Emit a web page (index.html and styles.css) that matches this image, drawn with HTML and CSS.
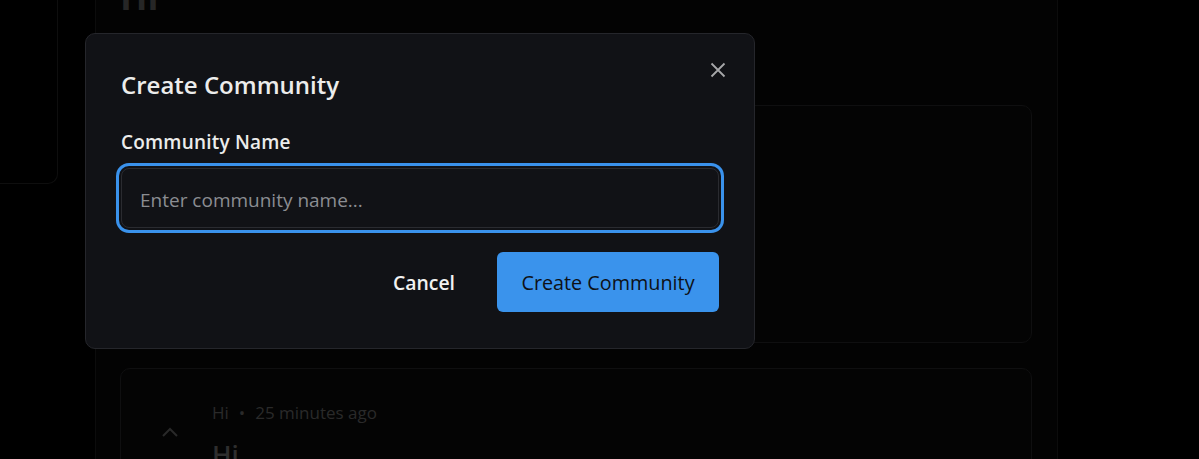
FILE: index.html
```html
<!DOCTYPE html>
<html lang="en">
<head>
<meta charset="utf-8">
<title>Create Community</title>
<link rel="stylesheet" href="styles.css">
</head>
<body>
<div class="page">
  <aside class="sidebar"><div class="side-box"></div></aside>
  <main class="feed">
    <h1 class="feed-title">Hi</h1>
    <article class="card card-tall"></article>
    <article class="card post">
      <div class="vote">
        <svg width="18" height="12" viewBox="0 0 18 12"><path d="M2 10 L9 3 L16 10" fill="none" stroke="currentColor" stroke-width="2"/></svg>
      </div>
      <div class="post-body">
        <div class="post-meta"><span>Hi</span><span class="dot">•</span><span>25 minutes ago</span></div>
        <h2 class="post-title">Hi</h2>
      </div>
    </article>
  </main>
</div>

<div class="overlay"></div>
<div class="modal" role="dialog">
  <button class="close" aria-label="Close">
    <svg width="16" height="16" viewBox="0 0 16 16"><path d="M1.5 1.5 L14.5 14.5 M14.5 1.5 L1.5 14.5" stroke="currentColor" stroke-width="1.8" fill="none"/></svg>
  </button>
  <h2 class="modal-title">Create Community</h2>
  <label class="field-label" for="cname">Community Name</label>
  <input id="cname" class="field-input" type="text" placeholder="Enter community name...">
  <div class="actions">
    <button class="btn-cancel">Cancel</button>
    <button class="btn-primary">Create Community</button>
  </div>
</div>
</body>
</html>
```

FILE: styles.css
```css
* { box-sizing: border-box; }
html, body { margin: 0; padding: 0; }
body {
  background: #000;
  font-family: "Open Sans", "Noto Sans", sans-serif;
  height: 459px;
  overflow: hidden;
}
.page {
  display: flex;
  height: 459px;
  overflow: hidden;
}
.sidebar {
  width: 95px;
  flex: none;
}
.side-box {
  width: 58px;
  height: 184px;
  border-right: 1px solid #0e0e0e;
  border-bottom: 1px solid #0e0e0e;
  border-bottom-right-radius: 10px;
}
.feed {
  width: 963px;
  flex: none;
  background: #030303;
  border-left: 1px solid #0c0c0c;
  border-right: 1px solid #0c0c0c;
  padding: 0 25px 0 24px;
  display: flex;
  flex-direction: column;
  gap: 25px;
  overflow: hidden;
}
.feed-title {
  margin: -22px 0 0;
  font-size: 36px;
  font-weight: 700;
  color: #262626;
  height: 38px;
  line-height: 38px;
}
.card {
  border: 1px solid #0f0f10;
  border-radius: 10px;
  background: #040404;
  flex: none;
}
.card-tall { height: 238px; margin-top: 64px; }
.post {
  display: flex;
  padding: 32px 0 0 40px;
  gap: 33px;
  height: 120px;
}
.vote { color: #292929; padding-top: 20px; }
.post-meta {
  display: flex;
  gap: 10px;
  color: #2a2a2a;
  font-size: 17px;
}
.post-title {
  margin: 12px 0 0;
  color: #2e2e2e;
  font-size: 26px;
  font-weight: 600;
}
.overlay {
  position: fixed;
  inset: 0;
  background: rgba(0,0,0,0);
}
.modal {
  position: absolute;
  left: 85px;
  top: 33px;
  width: 670px;
  height: 316px;
  background: #111216;
  border: 1px solid #25262b;
  border-radius: 10px;
  padding: 35px 35px;
  display: flex;
  flex-direction: column;
}
.close {
  position: absolute;
  top: 28px;
  right: 28px;
  background: none;
  border: 0;
  padding: 0;
  color: #a7a7a9;
  width: 16px;
  height: 16px;
  display: flex;
}
.modal-title {
  margin: 0;
  font-size: 24px;
  font-weight: 600;
  color: #ececeb;
  line-height: 32px;
}
.field-label {
  margin-top: 28px;
  font-size: 19px;
  font-weight: 600;
  color: #ececeb;
  line-height: 26px;
  letter-spacing: 0.2px;
}
.field-input {
  margin-top: 13px;
  height: 60px;
  width: 598px;
  flex: none;
  background: #111216;
  border: 1px solid #2a2b30;
  border-radius: 8px;
  box-shadow: 0 0 0 2px #111216, 0 0 0 5px #3a92ec;
  padding: 3px 18px 0;
  font-family: inherit;
  font-size: 19px;
  color: #e5e5e5;
  outline: none;
}
.field-input::placeholder { color: #8b8d92; }
.actions {
  margin-top: 24px;
  display: flex;
  justify-content: flex-end;
  align-items: center;
  gap: 18px;
}
.btn-cancel {
  background: none;
  border: 0;
  font-family: inherit;
  font-size: 19.4px;
  font-weight: 600;
  color: #f2f2f2;
  padding: 0 24px;
  height: 60px;
}
.btn-primary {
  background: #3a93ec;
  border: 0;
  border-radius: 6px;
  height: 60px;
  width: 222px;
  font-family: inherit;
  font-size: 19.8px;
  font-weight: 500;
  color: #0e1116;
}
```
